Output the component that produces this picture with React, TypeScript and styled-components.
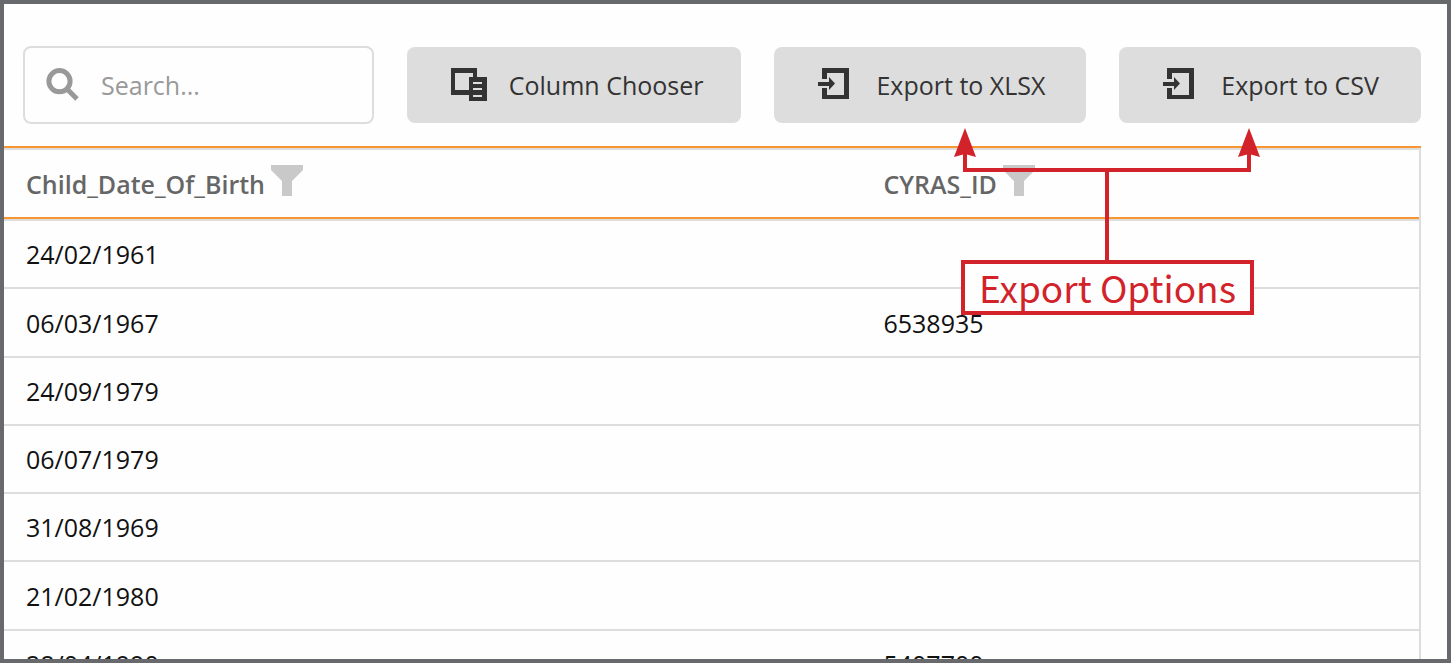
import React from "react";
import styled, { createGlobalStyle } from "styled-components";

const GlobalStyle = createGlobalStyle`
  *, *::before, *::after { box-sizing: border-box; }
  body { margin: 0; background: #fefefe; }
`;

const Frame = styled.main`
  position: relative;
  height: 100vh;
  overflow: hidden;
  border: 4px solid #68696d;
  background: #fefefe;
  font-family: "Open Sans", "Noto Sans", sans-serif;
  font-size: 25px;
  line-height: 34px;
  color: #111;
`;

const Toolbar = styled.div`
  display: flex;
  align-items: center;
  gap: 33px;
  padding: 42px 26px 22px 19px;
`;

const SearchBox = styled.label`
  flex: 307 1 0;
  min-width: 0;
  height: 78px;
  display: flex;
  align-items: center;
  gap: 22px;
  padding: 0 20px;
  border: 2px solid #ddd;
  border-radius: 8px;
`;

const SearchInput = styled.input`
  flex: 1;
  min-width: 0;
  padding: 0;
  border: 0;
  outline: 0;
  background: transparent;
  font: inherit;
  color: #333;
  &::placeholder { color: #999; opacity: 1; }
`;

const ToolButton = styled.button<{ $grow: number }>`
  flex: ${(p) => p.$grow} 1 0;
  min-width: 0;
  height: 76px;
  display: flex;
  align-items: center;
  gap: 22px;
  padding: 0 0 0 44px;
  border: 0;
  border-radius: 8px;
  background: #ddd;
  font: inherit;
  color: #333;
  white-space: nowrap;
  cursor: pointer;
`;

const Icon = styled.svg`
  flex: none;
  display: block;
`;

const GridArea = styled.div`
  margin-right: 26px;
  border-top: 2px solid #f79633;
`;

const Grid = styled.table`
  width: 100%;
  table-layout: fixed;
  border-collapse: separate;
  border-spacing: 0;
  border-top: 2px solid #ddd;
  border-right: 2px solid #ddd;
`;

const HeaderRow = styled.tr`
  height: 69px;
`;

const HeaderCell = styled.th<{ $width?: string }>`
  width: ${(p) => p.$width ?? "auto"};
  padding: 0 22px;
  border-bottom: 2px solid #f79633;
  text-align: left;
  font-weight: 600;
  color: #666;
`;

const HeaderContent = styled.div`
  display: flex;
  align-items: center;
  gap: 6px;
`;

const FilterButton = styled.button`
  padding: 0 0 6px;
  border: 0;
  background: none;
  cursor: pointer;
`;

const Body = styled.tbody`
  & > tr:first-child > td { border-top: 2px solid #ddd; }
`;

const Row = styled.tr`
  height: 68px;
  &:first-child { height: 70px; }
  &:nth-child(4n + 2) { height: 69px; }
`;

const Cell = styled.td`
  padding: 0 22px;
  border-bottom: 2px solid #ddd;
`;

const Callout = styled.div`
  position: absolute;
  top: 124px;
  right: 187px;
  width: 310px;
  display: flex;
  flex-direction: column;
  pointer-events: none;
`;

const CalloutLabel = styled.div`
  margin: 0 0 0 11px;
  width: 293px;
  height: 55px;
  border: 4px solid #d2232a;
  background: #fefefe;
  color: #d2232a;
  font-family: "Noto Sans CJK SC", "Noto Sans", sans-serif;
  font-size: 37px;
  line-height: 46px;
  text-align: center;
  white-space: nowrap;
`;

const SearchIcon = () => (
  <Icon width="34" height="34" viewBox="0 0 34 34" fill="none" stroke="#999" aria-hidden="true">
    <circle cx="14.5" cy="13.2" r="10.6" strokeWidth="5" />
    <path d="M21.5 20.5 L32 31" strokeWidth="5" />
  </Icon>
);

const ColumnsIcon = () => (
  <Icon width="36" height="34" viewBox="0 0 36 34" aria-hidden="true">
    <path fill="#333" fillRule="evenodd" d="M0 0H26V9H36V33H18V27H0ZM4 5V22H18V9H22V5Z" />
    <path fill="#ddd" d="M22 14H31V16H22ZM22 20H31V22H22ZM22 27H31V29H22Z" />
  </Icon>
);

const ExportIcon = () => (
  <Icon width="36" height="34" viewBox="0 0 36 34" aria-hidden="true">
    <path fill="#333" d="M4 0H31V31H4V20H9V27H26V5H9V11H4Z" />
    <path fill="#333" d="M0 14H11V9L17 15.5L11 22V18H0Z" />
  </Icon>
);

const FilterIcon = () => (
  <Icon width="32" height="31" viewBox="0 0 32 31" aria-hidden="true">
    <path fill="#c9c9c9" d="M0 0H32V5L21 16V31H11V16L0 5Z" />
  </Icon>
);

const Connector = () => (
  <Icon width="310" height="132" viewBox="0 0 310 132" fill="#d2232a" aria-hidden="true">
    <path d="M13 40V24H17V40H297V24H301V44H159V132H155V44H13Z" />
    <path d="M15 0L26 29L15 26L4 29Z" />
    <path d="M299 0L310 29L299 26L288 29Z" />
  </Icon>
);

const columns = [
  { name: "Child_Date_Of_Birth", width: "60.6%" },
  { name: "CYRAS_ID", width: undefined },
];

const records = [
  ["24/02/1961", ""],
  ["06/03/1967", "6538935"],
  ["24/09/1979", ""],
  ["06/07/1979", ""],
  ["31/08/1969", ""],
  ["21/02/1980", ""],
  ["28/04/1990", "5407700"],
];

export default function App() {
  return (
    <>
      <GlobalStyle />
      <Frame>
        <Toolbar>
          <SearchBox>
            <SearchIcon />
            <SearchInput type="text" placeholder="Search..." aria-label="Search" />
          </SearchBox>
          <ToolButton type="button" $grow={291}>
            <ColumnsIcon />
            Column Chooser
          </ToolButton>
          <ToolButton type="button" $grow={268}>
            <ExportIcon />
            Export to XLSX
          </ToolButton>
          <ToolButton type="button" $grow={258}>
            <ExportIcon />
            Export to CSV
          </ToolButton>
        </Toolbar>
        <GridArea>
          <Grid>
            <thead>
              <HeaderRow>
                {columns.map((c) => (
                  <HeaderCell key={c.name} scope="col" $width={c.width}>
                    <HeaderContent>
                      {c.name}
                      <FilterButton type="button" aria-label={"Filter " + c.name}>
                        <FilterIcon />
                      </FilterButton>
                    </HeaderContent>
                  </HeaderCell>
                ))}
              </HeaderRow>
            </thead>
            <Body>
              {records.map(([date, id]) => (
                <Row key={date}>
                  <Cell>{date}</Cell>
                  <Cell>{id}</Cell>
                </Row>
              ))}
            </Body>
          </Grid>
        </GridArea>
        <Callout>
          <Connector />
          <CalloutLabel>Export Options</CalloutLabel>
        </Callout>
      </Frame>
    </>
  );
}
